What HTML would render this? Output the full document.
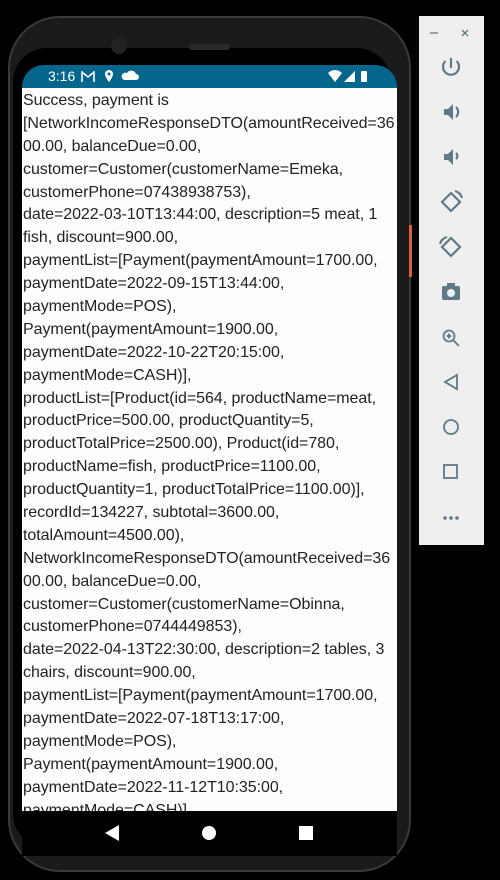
<!DOCTYPE html>
<html><head><meta charset="utf-8"><style>
*{margin:0;padding:0;box-sizing:border-box}
body{width:500px;height:880px;background:#000;position:relative;overflow:hidden;font-family:"Liberation Sans",sans-serif}
.phone{position:absolute;left:8px;top:16px;width:403px;height:856px;border-radius:52px;background:#1b1b1b;border:2px solid #3a3a3a}
.inner{position:absolute;left:13px;top:48px;width:378px;height:800px;border-radius:34px;background:#000;overflow:hidden}
.status{position:absolute;left:22px;top:65px;width:375px;height:24px;background:#05668d;border-radius:22px 22px 0 0;color:#fff;font-size:14px}
.content{position:absolute;left:22px;top:88px;width:375px;height:723px;background:#fdfdff;overflow:hidden;padding-top:2px}
.content div{white-space:pre;font-size:16px;color:#222;height:22.9px;line-height:22.9px;padding-left:1px;letter-spacing:-0.05px}
.nav{position:absolute;left:22px;top:811px;width:375px;height:45px;background:#000}
.panel{position:absolute;left:419px;top:16px;width:65px;height:529px;background:#efefef}
</style></head><body>
<div class="phone"></div>
<div class="inner"></div>
<div style="position:absolute;left:111px;top:38px;width:16px;height:16px;border-radius:50%;background:#222"></div>
<div style="position:absolute;left:189px;top:44px;width:41px;height:6px;border-radius:3px;background:#2a2a2a"></div>
<div class="status">
<span style="position:absolute;left:26px;top:3px">3:16</span>
<svg style="position:absolute;left:59px;top:6px" width="14" height="12"><path d="M1 11V1l6 5 6-5v10" fill="none" stroke="#fff" stroke-width="1.6"/></svg>
<svg style="position:absolute;left:82px;top:5px" width="40" height="14"><path d="M5 0a4 4 0 0 1 4 4c0 3-4 8-4 8s-4-5-4-8a4 4 0 0 1 4-4z" fill="#fff"/><circle cx="5" cy="4" r="1.5" fill="#05668d"/><path d="M20 10h12a3 3 0 0 0 0-6 5 5 0 0 0-9-1 3.5 3.5 0 0 0-3 7z" fill="#fff"/></svg>
<svg style="position:absolute;left:306px;top:5px" width="70" height="15"><path d="M0 3q7-6 14 0l-7 9z" fill="#fff"/><path d="M16 12h11v-11z" fill="#fff"/><rect x="33" y="1" width="6" height="11" rx="1" fill="#fff"/></svg>
</div>
<div class="content">
<div>Success, payment is</div>
<div>[NetworkIncomeResponseDTO(amountReceived=36</div>
<div>00.00, balanceDue=0.00,</div>
<div>customer=Customer(customerName=Emeka,</div>
<div>customerPhone=07438938753),</div>
<div>date=2022-03-10T13:44:00, description=5 meat, 1</div>
<div>fish, discount=900.00,</div>
<div>paymentList=[Payment(paymentAmount=1700.00,</div>
<div>paymentDate=2022-09-15T13:44:00,</div>
<div>paymentMode=POS),</div>
<div>Payment(paymentAmount=1900.00,</div>
<div>paymentDate=2022-10-22T20:15:00,</div>
<div>paymentMode=CASH)],</div>
<div>productList=[Product(id=564, productName=meat,</div>
<div>productPrice=500.00, productQuantity=5,</div>
<div>productTotalPrice=2500.00), Product(id=780,</div>
<div>productName=fish, productPrice=1100.00,</div>
<div>productQuantity=1, productTotalPrice=1100.00)],</div>
<div>recordId=134227, subtotal=3600.00,</div>
<div>totalAmount=4500.00),</div>
<div>NetworkIncomeResponseDTO(amountReceived=36</div>
<div>00.00, balanceDue=0.00,</div>
<div>customer=Customer(customerName=Obinna,</div>
<div>customerPhone=0744449853),</div>
<div>date=2022-04-13T22:30:00, description=2 tables, 3</div>
<div>chairs, discount=900.00,</div>
<div>paymentList=[Payment(paymentAmount=1700.00,</div>
<div>paymentDate=2022-07-18T13:17:00,</div>
<div>paymentMode=POS),</div>
<div>Payment(paymentAmount=1900.00,</div>
<div>paymentDate=2022-11-12T10:35:00,</div>
<div>paymentMode=CASH)],</div>
</div>
<div class="nav">
<svg width="375" height="45"><path d="M83 22l14-8v16z" fill="#fff"/><circle cx="187" cy="22" r="7" fill="#fff"/><rect x="277" y="15" width="14" height="14" fill="#fff"/></svg>
</div>
<div style="position:absolute;left:409px;top:225px;width:3px;height:52px;background:#d9603f"></div>
<div class="panel">
<svg width="65" height="529" fill="none" stroke="#5f7986" stroke-width="2.2">
<path d="M11 17h8" stroke-width="1.3"/><path d="M43 14l6 6M49 14l-6 6" stroke-width="1.3"/>
<path d="M32 42v10M26.5 45a8 8 0 1 0 11 0"/>
<path d="M25 93h4l5-5v16l-5-5h-4z" fill="#5f7986" stroke="none"/><path d="M37 91a7 7 0 0 1 0 10"/>
<path d="M25 138h4l5-5v16l-5-5h-4z" fill="#5f7986" stroke="none"/><path d="M37 137a4 4 0 0 1 0 6"/>
<path d="M32 177l9 9-9 9-9-9z"/><path d="M36 175a10 10 0 0 1 7 7"/>
<path d="M32 222l9 9-9 9-9-9z"/><path d="M21 228a10 10 0 0 1 7-7"/>
<rect x="23" y="270" width="18" height="14" rx="2" fill="#5f7986" stroke="none"/><rect x="28" y="267" width="8" height="4" fill="#5f7986" stroke="none"/><circle cx="32" cy="277" r="4" fill="#efefef" stroke="none"/>
<circle cx="30" cy="320" r="5.5" stroke-width="1.8"/><path d="M34 324l6 6M27.5 320h5M30 317.5v5" stroke-width="1.8"/>
<path d="M38 359v14l-12-7z" stroke-width="1.8"/>
<circle cx="32" cy="411" r="7" stroke-width="1.8"/>
<rect x="25" y="449" width="13" height="13" stroke-width="1.8"/>
<circle cx="26" cy="502" r="1.8" fill="#5f7986" stroke="none"/><circle cx="32" cy="502" r="1.8" fill="#5f7986" stroke="none"/><circle cx="38" cy="502" r="1.8" fill="#5f7986" stroke="none"/>
</svg>
</div>
</body></html>
